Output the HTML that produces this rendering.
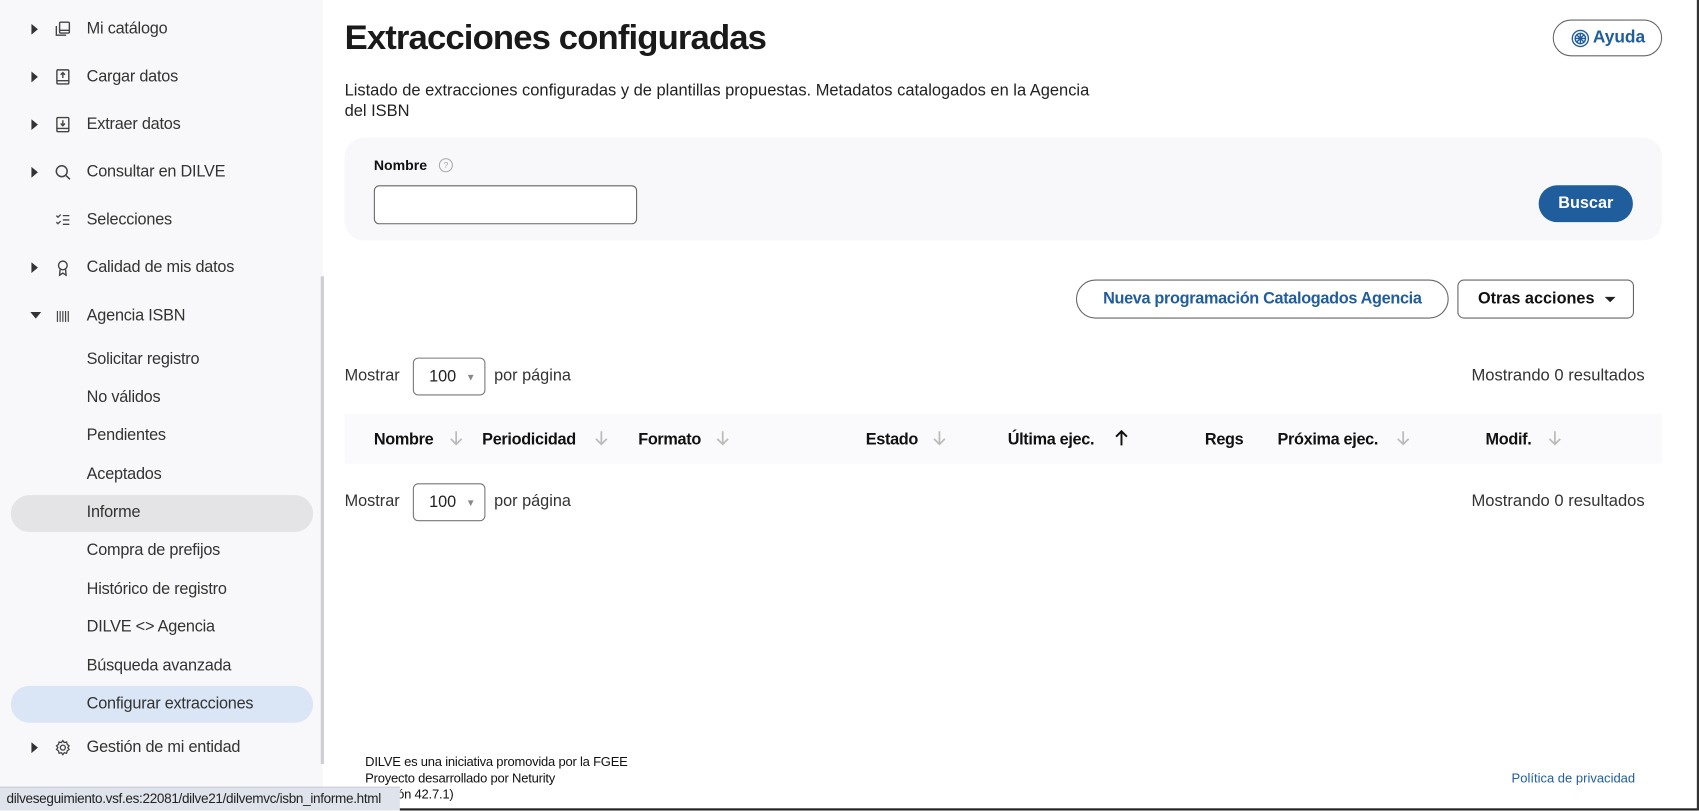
<!DOCTYPE html>
<html><head><meta charset="utf-8"><style>
html,body{margin:0;padding:0;width:1699px;height:811px;overflow:hidden;background:#fff}
#w{position:absolute;left:0;top:0;width:1568px;height:748px;transform:scale(1.08355);transform-origin:0 0;font-family:"Liberation Sans",sans-serif;color:#222}
.a{position:absolute;white-space:nowrap}
#sb{position:absolute;left:0;top:0;width:298px;height:748px;background:#f8f8fa}
.it{position:absolute;left:80px;font-size:15px;color:#333;letter-spacing:-0.2px}
.car{position:absolute;left:29px;width:0;height:0;border-top:5px solid transparent;border-bottom:5px solid transparent;border-left:6px solid #333}
.ic{position:absolute;left:50px}
.pill{position:absolute;left:10px;width:279px;height:34px;border-radius:17px}
.th{position:absolute;top:397px;font-size:15px;font-weight:bold;color:#111;letter-spacing:-0.3px}
.ar{position:absolute;top:395px}
.sel{position:absolute;width:65px;height:33px;border:1px solid #777;border-radius:5px;background:#fff}
</style></head><body><div id="w">
<div id="sb">
 <div class="pill" style="top:457px;background:#e4e4e6"></div>
 <div class="pill" style="top:633px;background:#dae6f6"></div>
 <div style="position:absolute;left:296px;top:255px;width:3px;height:450px;background:#cfcfd3"></div>
 <div class="car" style="top:22px"></div><svg class="ic" style="top:19px" width="16" height="16" viewBox="0 0 16 16" fill="none" stroke="#444" stroke-width="1.3"><rect x="5" y="1.5" width="9" height="10" rx="1"/><path d="M2 5v8.5h9M5 9h9"/></svg><div class="it" style="top:18px">Mi catálogo</div>
 <div class="car" style="top:66px"></div><svg class="ic" style="top:63px" width="16" height="16" viewBox="0 0 16 16" fill="none" stroke="#444" stroke-width="1.3"><rect x="2.5" y="1.5" width="11" height="13" rx="1"/><path d="M2.5 11.5h11M8 9V4M6 6l2-2 2 2"/></svg><div class="it" style="top:62px">Cargar datos</div>
 <div class="car" style="top:110px"></div><svg class="ic" style="top:107px" width="16" height="16" viewBox="0 0 16 16" fill="none" stroke="#444" stroke-width="1.3"><rect x="2.5" y="1.5" width="11" height="13" rx="1"/><path d="M2.5 11.5h11M8 4v5M6 7l2 2 2-2"/></svg><div class="it" style="top:106px">Extraer datos</div>
 <div class="car" style="top:154px"></div><svg class="ic" style="top:151px" width="16" height="16" viewBox="0 0 16 16" fill="none" stroke="#444" stroke-width="1.4"><circle cx="7" cy="7" r="5"/><path d="M11 11l3.5 3.5"/></svg><div class="it" style="top:150px">Consultar en DILVE</div>
 <svg class="ic" style="top:195px" width="16" height="16" viewBox="0 0 16 16" fill="none" stroke="#444" stroke-width="1.2"><path d="M2 4l1.5 1.5L6 3M2 10l1.5 1.5L6 9M8 4h6M8 8h6M8 12h6"/></svg><div class="it" style="top:194px">Selecciones</div>
 <div class="car" style="top:242px"></div><svg class="ic" style="top:239px" width="16" height="16" viewBox="0 0 16 16" fill="none" stroke="#444" stroke-width="1.3"><circle cx="8" cy="6" r="4"/><path d="M5.5 9.5L5 15l3-2 3 2-.5-5.5"/></svg><div class="it" style="top:238px">Calidad de mis datos</div>
 <div style="position:absolute;left:28px;top:288px;border-left:5px solid transparent;border-right:5px solid transparent;border-top:6px solid #333"></div>
 <svg class="ic" style="top:285px" width="16" height="14" viewBox="0 0 16 14" stroke="#444" stroke-width="1.1"><path d="M3 2v10M5.5 2v10M8 2v10M10.5 2v10M13 2v10"/></svg><div class="it" style="top:283px">Agencia ISBN</div>
 <div class="it" style="top:323px">Solicitar registro</div>
 <div class="it" style="top:358px">No válidos</div>
 <div class="it" style="top:393px">Pendientes</div>
 <div class="it" style="top:429px">Aceptados</div>
 <div class="it" style="top:464px">Informe</div>
 <div class="it" style="top:499px">Compra de prefijos</div>
 <div class="it" style="top:535px">Histórico de registro</div>
 <div class="it" style="top:570px">DILVE &lt;&gt; Agencia</div>
 <div class="it" style="top:606px">Búsqueda avanzada</div>
 <div class="it" style="top:641px">Configurar extracciones</div>
 <div class="car" style="top:685px"></div><svg class="ic" style="top:682px" width="16" height="16" viewBox="0 0 16 16" fill="none" stroke="#444" stroke-width="1.2"><circle cx="8" cy="8" r="2.3"/><path d="M8 1.5l1.3 1.8 2.2-.5.5 2.2 1.8 1.3-1.2 1.7 1.2 1.7-1.8 1.3-.5 2.2-2.2-.5L8 14.5l-1.3-1.8-2.2.5-.5-2.2L2.2 9.7 3.4 8 2.2 6.3 4 5l.5-2.2 2.2.5z"/></svg><div class="it" style="top:681px">Gestión de mi entidad</div>
</div>
<div class="a" style="left:318px;top:16px;font-size:32px;font-weight:bold;color:#1a1a1a;letter-spacing:-0.8px">Extracciones configuradas</div>
<div class="a" style="left:1433px;top:18px;width:101px;height:34px;border:1px solid #666;border-radius:17px;box-sizing:border-box"></div>
<svg class="a" style="left:1450px;top:27px" width="17" height="17" viewBox="0 0 16 16" fill="none" stroke="#1f5d9c" stroke-width="1.2"><circle cx="8" cy="8" r="7"/><circle cx="8" cy="8" r="4.5"/><path d="M8 3.5v9M3.5 8h9M4.8 4.8l6.4 6.4M11.2 4.8l-6.4 6.4"/></svg>
<div class="a" style="left:1470px;top:26px;font-size:16px;font-weight:bold;color:#1f5d9c">Ayuda</div>
<div class="a" style="left:318px;top:74px;font-size:15.2px;line-height:19px;color:#222;white-space:normal;width:760px">Listado de extracciones configuradas y de plantillas propuestas. Metadatos catalogados en la Agencia<br>del ISBN</div>
<div class="a" style="left:318px;top:127px;width:1216px;height:95px;background:#f8f8fa;border-radius:18px"></div>
<div class="a" style="left:345px;top:145px;font-size:13px;font-weight:bold;color:#111">Nombre</div>
<div class="a" style="left:405px;top:146px;width:11px;height:11px;border:1px solid #aaa;border-radius:50%;font-size:8px;color:#aaa;text-align:center;line-height:11px">?</div>
<div class="a" style="left:345px;top:171px;width:241px;height:34px;border:1px solid #666;border-radius:5px;background:#fff"></div>
<div class="a" style="left:1420px;top:171px;width:87px;height:34px;background:#1f5d9c;border-radius:17px;color:#fff;font-weight:bold;font-size:15px;text-align:center;line-height:34px">Buscar</div>
<div class="a" style="left:993px;top:258px;width:342px;height:34px;border:1px solid #666;border-radius:18px;color:#1f5d9c;font-weight:bold;font-size:15px;text-align:center;line-height:34px;letter-spacing:-0.3px">Nueva programación Catalogados Agencia</div>
<div class="a" style="left:1345px;top:258px;width:161px;height:34px;border:1px solid #666;border-radius:6px;color:#111;font-weight:bold;font-size:15px;line-height:34px;box-sizing:content-box"><span style="margin-left:18px">Otras acciones</span><span style="position:absolute;left:135px;top:15px;border-left:5px solid transparent;border-right:5px solid transparent;border-top:5px solid #222"></span></div>
<div class="a" style="left:318px;top:338px;font-size:15px;color:#333">Mostrar</div>
<div class="sel" style="left:381px;top:330px"><span style="position:absolute;left:14px;top:8px;font-size:15px">100</span><span style="position:absolute;left:48px;top:7px;font-size:9px;color:#888;line-height:20px">▼</span></div>
<div class="a" style="left:456px;top:338px;font-size:15px;color:#333">por página</div>
<div class="a" style="left:1358px;top:338px;font-size:15.3px;color:#333">Mostrando 0 resultados</div>
<div class="a" style="left:318px;top:382px;width:1216px;height:46px;background:#fafafc"></div>
<svg width="0" height="0" style="position:absolute"><defs><g id="dn"><path d="M8 2v12M3 9l5 5 5-5" fill="none" stroke="#bbb" stroke-width="1.6"/></g></defs></svg>
<div class="th" style="left:345px">Nombre</div><svg class="ar" style="left:413px" width="16" height="18" viewBox="0 0 16 16"><use href="#dn"/></svg>
<div class="th" style="left:445px">Periodicidad</div><svg class="ar" style="left:547px" width="16" height="18" viewBox="0 0 16 16"><use href="#dn"/></svg>
<div class="th" style="left:589px">Formato</div><svg class="ar" style="left:659px" width="16" height="18" viewBox="0 0 16 16"><use href="#dn"/></svg>
<div class="th" style="left:799px">Estado</div><svg class="ar" style="left:859px" width="16" height="18" viewBox="0 0 16 16"><use href="#dn"/></svg>
<div class="th" style="left:930px">Última ejec.</div><svg class="ar" style="left:1027px" width="16" height="18" viewBox="0 0 16 16"><path d="M8 15V3M3 7l5-5 5 5" fill="none" stroke="#111" stroke-width="1.8"/></svg>
<div class="th" style="left:1112px">Regs</div>
<div class="th" style="left:1179px">Próxima ejec.</div><svg class="ar" style="left:1287px" width="16" height="18" viewBox="0 0 16 16"><use href="#dn"/></svg>
<div class="th" style="left:1371px">Modif.</div><svg class="ar" style="left:1427px" width="16" height="18" viewBox="0 0 16 16"><use href="#dn"/></svg>
<div class="a" style="left:318px;top:454px;font-size:15px;color:#333">Mostrar</div>
<div class="sel" style="left:381px;top:446px"><span style="position:absolute;left:14px;top:8px;font-size:15px">100</span><span style="position:absolute;left:48px;top:7px;font-size:9px;color:#888;line-height:20px">▼</span></div>
<div class="a" style="left:456px;top:454px;font-size:15px;color:#333">por página</div>
<div class="a" style="left:1358px;top:454px;font-size:15.3px;color:#333">Mostrando 0 resultados</div>
<div class="a" style="left:337px;top:696px;font-size:12px;line-height:15px;color:#111;letter-spacing:-0.2px">DILVE es una iniciativa promovida por la FGEE<br>Proyecto desarrollado por Neturity<br>(Versión 42.7.1)</div>
<div class="a" style="left:1395px;top:711px;font-size:12px;color:#1f5d9c">Política de privacidad</div>
<div class="a" style="left:0;top:726px;width:369px;height:22px;background:#dfe3eb;border-top:1px solid #c9ced8;font-size:12.5px;line-height:21px;color:#222;padding-left:6px;box-sizing:border-box;letter-spacing:-0.3px">dilveseguimiento.vsf.es:22081/dilve21/dilvemvc/isbn_informe.html</div>
<div class="a" style="left:369px;top:746px;width:1199px;height:2px;background:#222"></div>
<div class="a" style="left:1566px;top:0;width:2px;height:748px;background:#333"></div>
</div></body></html>
